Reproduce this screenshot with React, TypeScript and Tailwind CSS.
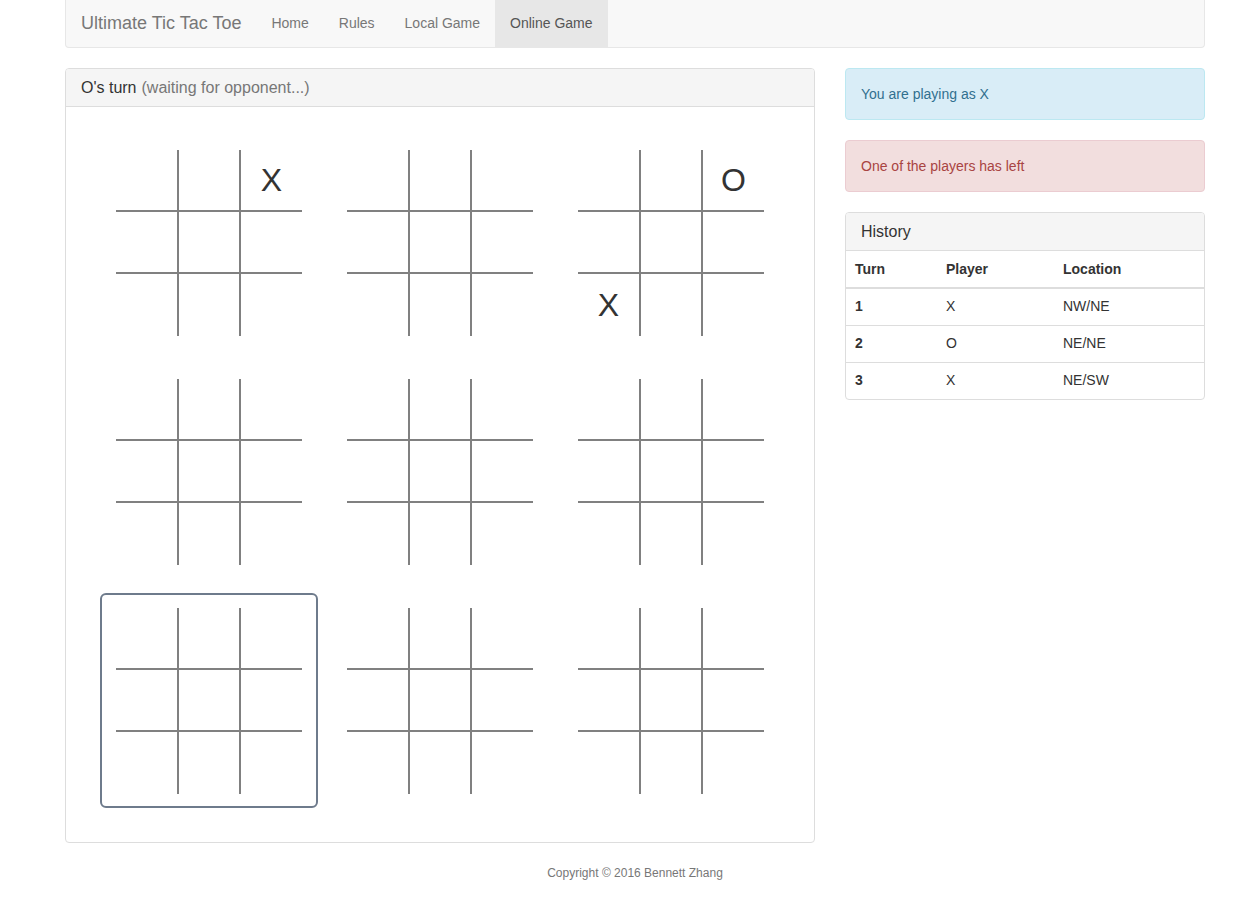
const marks: Record<string, string> = {
  "0-2": "X",
  "2-2": "O",
  "2-6": "X",
};

const history = [
  { turn: 1, player: "X", location: "NW/NE" },
  { turn: 2, player: "O", location: "NE/NE" },
  { turn: 3, player: "X", location: "NE/SW" },
];

function Board({ index, active }: { index: number; active?: boolean }) {
  return (
    <div
      className={`w-[218px] h-[215px] px-[14px] pt-[13px] pb-[12px] rounded-[6px] border-2 ${
        active ? "border-[#6e7b8c]" : "border-transparent"
      }`}
    >
      <div className="grid grid-cols-[63px_62px_61px] grid-rows-[62px_62px_62px]">
        {Array.from({ length: 9 }).map((_, i) => {
          const r = Math.floor(i / 3);
          const c = i % 3;
          return (
            <div
              key={i}
              className={`flex items-center justify-center text-[32px] leading-none text-[#333] border-[#808080] ${
                c < 2 ? "border-r-2" : ""
              } ${r < 2 ? "border-b-2" : ""}`}
            >
              {marks[`${index}-${i}`] ?? ""}
            </div>
          );
        })}
      </div>
    </div>
  );
}

export default function App() {
  return (
    <div className="min-h-[912px] bg-white font-['Liberation_Sans',Arial,sans-serif] text-[14px] text-[#333]">
      <div className="ml-[65px] w-[1140px]">
        {/* Navbar */}
        <nav className="h-[48px] flex items-stretch bg-[#f8f8f8] border border-t-0 border-[#e7e7e7] rounded-b-[4px]">
          <span className="flex items-center pl-[15px] pr-[15px] text-[18px] text-[#777]">
            Ultimate Tic Tac Toe
          </span>
          <a className="flex items-center px-[15px] text-[#777]">Home</a>
          <a className="flex items-center px-[15px] text-[#777]">Rules</a>
          <a className="flex items-center px-[15px] text-[#777]">Local Game</a>
          <a className="flex items-center px-[15px] text-[#555] bg-[#e7e7e7]">Online Game</a>
        </nav>

        <div className="mt-[20px] flex gap-[30px] items-start">
          {/* Game panel */}
          <div className="w-[750px] border border-[#ddd] rounded-[4px] overflow-hidden">
            <div className="h-[38px] flex items-center px-[15px] bg-[#f5f5f5] border-b border-[#ddd] text-[16px]">
              <span className="text-[#333]">O's turn</span>
              <span className="ml-[5px] text-[#777]">(waiting for opponent...)</span>
            </div>
            <div className="pt-[28px] pb-[34px] flex justify-center">
              <div className="grid grid-cols-[218px_218px_218px] gap-x-[13px] gap-y-[14px]">
                {Array.from({ length: 9 }).map((_, i) => (
                  <Board key={i} index={i} active={i === 6} />
                ))}
              </div>
            </div>
          </div>

          {/* Sidebar */}
          <div className="w-[360px]">
            <div className="p-[15px] leading-[20px] bg-[#d9edf7] border border-[#bce8f1] text-[#31708f] rounded-[4px]">
              You are playing as X
            </div>
            <div className="mt-[20px] p-[15px] leading-[20px] bg-[#f2dede] border border-[#ebccd1] text-[#a94442] rounded-[4px]">
              One of the players has left
            </div>
            <div className="mt-[20px] border border-[#ddd] rounded-[4px] overflow-hidden">
              <div className="h-[38px] flex items-center px-[15px] bg-[#f5f5f5] border-b border-[#ddd] text-[16px]">
                History
              </div>
              <table className="w-full text-left border-collapse">
                <thead>
                  <tr className="border-b-2 border-[#ddd]">
                    <th className="w-[92px] h-[37px] px-[9px] font-bold">Turn</th>
                    <th className="w-[117px] px-[8px] font-bold">Player</th>
                    <th className="px-[8px] font-bold">Location</th>
                  </tr>
                </thead>
                <tbody>
                  {history.map((h, i) => (
                    <tr key={h.turn} className={i > 0 ? "border-t border-[#ddd]" : ""}>
                      <th className="h-[37px] px-[9px] font-bold">{h.turn}</th>
                      <td className="px-[8px]">{h.player}</td>
                      <td className="px-[8px]">{h.location}</td>
                    </tr>
                  ))}
                </tbody>
              </table>
            </div>
          </div>
        </div>

        <footer className="mt-[21px] text-center text-[12px] text-[#777]">
          Copyright © 2016 Bennett Zhang
        </footer>
      </div>
    </div>
  );
}
